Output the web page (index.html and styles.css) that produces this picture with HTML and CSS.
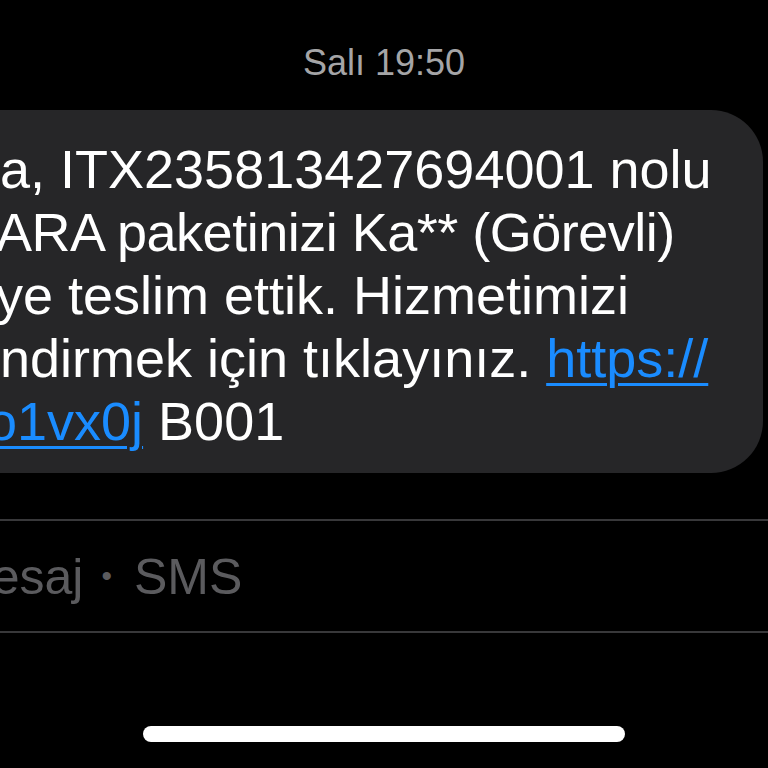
FILE: index.html
```html
<!DOCTYPE html>
<html lang="tr">

<head>
    <meta charset="UTF-8">
    <meta name="viewport" content="width=device-width, initial-scale=1.0">
    <title>Mesajlar</title>
    <link rel="stylesheet" href="styles.css">
</head>

<body>
    <div class="screen">
        <div class="timestamp">Salı 19:50</div>

        <div class="thread">
            <div class="bubble">
                <p class="bubble-text">
                    <span class="line">a, ITX235813427694001 nolu</span>
                    <span class="line cut tight">ARA paketinizi Ka** (Görevli)</span>
                    <span class="line cut">ye teslim ettik. Hizmetimizi</span>
                    <span class="line">ndirmek için tıklayınız. <a href="#" class="link">https://</a></span>
                    <span class="line cut-more"><a href="#" class="link">o1vx0j</a> B001</span>
                </p>
            </div>
        </div>

        <div class="composer">
            <span class="placeholder">Mesaj<span class="sep">•</span>SMS</span>
        </div>

        <div class="home-bar">
            <div class="home-indicator"></div>
        </div>
    </div>
</body>

</html>
```

FILE: styles.css
```css
body {
    margin: 0;
    padding: 0;
    background-color: #000;
    color: #fff;
    font-family: "Liberation Sans", Arial, sans-serif;
    overflow: hidden;
}

.screen {
    display: flex;
    flex-direction: column;
    height: 768px;
    width: 768px;
    overflow: hidden;
}

.timestamp {
    margin-top: 43px;
    height: 40px;
    line-height: 40px;
    font-size: 36px;
    color: #a5a5a7;
    text-align: center;
}

.thread {
    margin-top: 27px;
    display: flex;
}

.bubble {
    margin-left: -80px;
    width: 843px;
    height: 363px;
    box-sizing: border-box;
    padding: 28px 40px 0 80px;
    background-color: #262628;
    border-radius: 52px;
}

.bubble-text {
    margin: 0;
    font-size: 54px;
    line-height: 63px;
    white-space: nowrap;
}

.line {
    display: block;
}

/* first letters are hidden behind the left edge */
.cut {
    margin-left: -4px;
}

.cut-more {
    margin-left: -13px;
}

.tight {
    letter-spacing: -0.5px;
}

.link {
    color: #1a8cff;
    text-decoration: underline;
    text-decoration-thickness: 3px;
    text-underline-offset: 6px;
}

.composer {
    margin-top: 46px;
    height: 110px;
    box-sizing: content-box;
    border-top: 2px solid #38383a;
    border-bottom: 2px solid #38383a;
    display: flex;
    align-items: center;
}

.placeholder {
    margin-left: -50px;
    font-size: 50px;
    line-height: 63px;
    color: #5b5b5e;
    white-space: nowrap;
}

.sep {
    display: inline-block;
    margin: 0 22px 0 18px;
    font-size: 30px;
    vertical-align: 8px;
}

.home-bar {
    flex: 1;
    display: flex;
    justify-content: center;
    padding-top: 93px;
}

.home-indicator {
    width: 482px;
    height: 16px;
    border-radius: 8px;
    background-color: #fff;
}
```
